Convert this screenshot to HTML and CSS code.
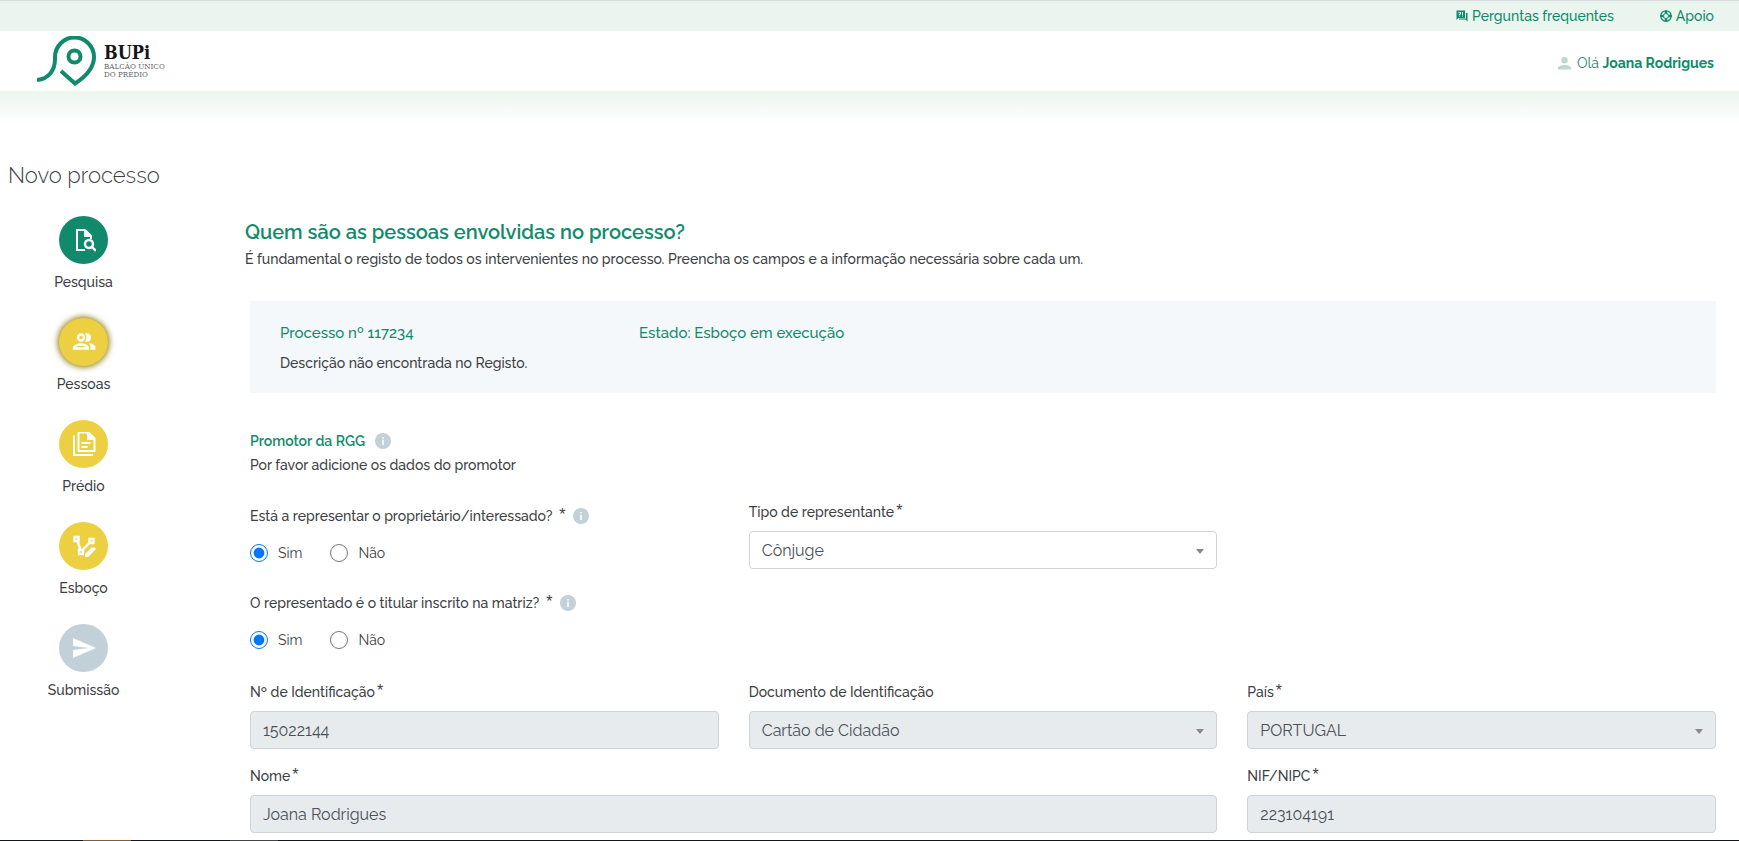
FILE: index.html
```html
<!DOCTYPE html>
<html lang="pt">
<head>
<meta charset="utf-8">
<title>BUPi - Novo processo</title>
<link rel="stylesheet" href="styles.css">
</head>
<body>
<nav class="topbar" aria-label="Ajuda">
  <a class="topbar-link" href="#faq">
    <svg class="icon-small" viewBox="0 0 24 24" aria-hidden="true"><path fill="currentColor" fill-rule="evenodd" d="M1 1h17v15H5l-4 4zM5 4v3h2V5h1v3H6v2h2V9h2V4zm1 7v2h2v-2zm6-7v6h2V4zm0 7v2h2v-2z"/><path fill="currentColor" d="M20 6h3v17l-4-4H6v-2h14z"/></svg>
    <span>Perguntas frequentes</span>
  </a>
  <a class="topbar-link" href="#apoio">
    <svg class="icon-small" viewBox="0 0 24 24" aria-hidden="true"><g fill="none" stroke="currentColor"><circle cx="12" cy="12" r="10.500" stroke-width="2.500"/><circle cx="12" cy="12" r="5" stroke-width="2"/><path stroke-width="5" d="M12 1v6M12 17v6M1 12h6M17 12h6"/></g></svg>
    <span>Apoio</span>
  </a>
</nav>
<header class="header">
  <a class="brand" href="#inicio" aria-label="BUPi Balcão Único do Prédio">
    <svg class="brand-mark" viewBox="0 0 60 50" aria-hidden="true"><g fill="none" stroke="#118a6b" stroke-width="4"><path d="M0 44C12 43 18 34 18 23V21A19 19 0 0 1 57 21C57 33 48 41 38 47.500L24 35"/><circle cx="37.500" cy="20.500" r="6"/></g></svg>
    <span class="brand-text">
      <strong class="brand-name">BUPi</strong>
      <span class="brand-sub">BALCÃO ÚNICO<br>DO PRÉDIO</span>
    </span>
  </a>
  <a class="user" href="#perfil">
    <svg class="icon-user" viewBox="0 0 16 16" aria-hidden="true"><path fill="#bdd9cc" d="M8 8a3.500 3.500 0 1 0 0-7 3.500 3.500 0 0 0 0 7zm0 1.500c-3 0-7 1.200-7 3.500v1.500h14V13c0-2.300-4-3.500-7-3.500z"/></svg>
    <span>Olá <strong>Joana Rodrigues</strong></span>
  </a>
</header>
<div class="fade"></div>
<h1 class="page-title">Novo processo</h1>
<div class="layout">
  <nav class="steps" aria-label="Etapas">
    <a class="step" href="#pesquisa">
      <span class="disc disc-done"><svg class="icon-step" viewBox="0 0 24 24"><path fill="none" stroke="#fff" stroke-width="2" d="M13 22H5V2h8l6 6v3"/><path fill="#fff" d="M12 1l8 8h-8z"/><circle cx="17" cy="16" r="4" fill="none" stroke="#fff" stroke-width="2.400"/><path stroke="#fff" stroke-width="2.400" d="M19 18l5 5"/></svg></span>
      <span>Pesquisa</span>
    </a>
    <a class="step" href="#pessoas" aria-current="step">
      <span class="disc disc-pending disc-current"><svg class="icon-step" viewBox="0 0 24 24"><g fill="none" stroke="#fff" stroke-width="2.400"><circle cx="9" cy="7.500" r="3"/><path d="M2 18.500v-.5c0-2 4-3.500 7-3.500s7 1.500 7 3.500v.5z"/></g><path fill="#fff" d="M13 3.800c3-1.500 6 .5 6 3.700s-3 5.200-6 3.700c2-2 2-5.400 0-7.400zM17 13c3 .5 6.500 2 6.500 5v1.700H18.500V18c0-2-.5-3.500-1.500-5z"/></svg></span>
      <span>Pessoas</span>
    </a>
    <a class="step" href="#predio">
      <span class="disc disc-pending"><svg class="icon-step" viewBox="0 0 24 24"><g fill="none" stroke="#fff" stroke-width="2"><path d="M6.500 0.500h10l6 6V19h-16zM2 3.500V23h19M9.500 11h9M9.500 15h6"/></g><path fill="#fff" d="M15 0l8 8h-8z"/></svg></span>
      <span>Prédio</span>
    </a>
    <a class="step" href="#esboco">
      <span class="disc disc-pending"><svg class="icon-step" viewBox="0 0 24 24"><g fill="none" stroke="#fff" stroke-width="2.400"><path d="M2.500 3h4v4h-4zM17.500 5h4v4h-4zM7 16h4v4H7zM5.500 7l3 9M17.500 9l-7 7"/></g><path fill="#fff" d="M13 20l7-7 1 1 1-1 2 2-8 8h-3z"/></svg></span>
      <span>Esboço</span>
    </a>
    <a class="step" href="#submissao">
      <span class="disc disc-off"><svg class="icon-step" viewBox="0 0 24 24"><path fill="#fff" d="M1 2l23 10L1 22v-8l16-2L1 10z"/></svg></span>
      <span>Submissão</span>
    </a>
  </nav>
  <main class="main">
    <div class="intro">
      <h2 class="intro-title">Quem são as pessoas envolvidas no processo?</h2>
      <p class="text">É fundamental o registo de todos os intervenientes no processo. Preencha os campos e a informação necessária sobre cada um.</p>
    </div>
    <section class="summary">
      <div class="summary-row">
        <span>Processo nº 117234</span>
        <span>Estado: Esboço em execução</span>
      </div>
      <p class="text">Descrição não encontrada no Registo.</p>
    </section>
    <form class="form">
      <div class="section-head">
        <h3 class="section-title">Promotor da RGG <svg class="info" viewBox="0 0 16 16"><circle cx="8" cy="8" r="8" fill="#c2d0d8"/><path fill="#fff" d="M7.200 4h1.600v1.600H7.200zM7.200 6.800h1.600V12H7.200z"/></svg></h3>
        <p class="text">Por favor adicione os dados do promotor</p>
      </div>
      <div class="grid">
        <div class="questions">
          <fieldset class="question">
            <legend class="legend">Está a representar o proprietário/interessado? <span class="star">*</span> <svg class="info" viewBox="0 0 16 16"><circle cx="8" cy="8" r="8" fill="#c2d0d8"/><path fill="#fff" d="M7.200 4h1.600v1.600H7.200zM7.200 6.800h1.600V12H7.200z"/></svg></legend>
            <div class="options">
              <label class="option"><input class="radio" type="radio" name="representa" checked> Sim</label>
              <label class="option"><input class="radio" type="radio" name="representa"> Não</label>
            </div>
          </fieldset>
          <fieldset class="question">
            <legend class="legend">O representado é o titular inscrito na matriz? <span class="star">*</span> <svg class="info" viewBox="0 0 16 16"><circle cx="8" cy="8" r="8" fill="#c2d0d8"/><path fill="#fff" d="M7.200 4h1.600v1.600H7.200zM7.200 6.800h1.600V12H7.200z"/></svg></legend>
            <div class="options">
              <label class="option"><input class="radio" type="radio" name="titular" checked> Sim</label>
              <label class="option"><input class="radio" type="radio" name="titular"> Não</label>
            </div>
          </fieldset>
        </div>
        <div class="field">
          <label class="label" for="tipo">Tipo de representante<span class="star">*</span></label>
          <span class="select-wrap"><select class="control" id="tipo"><option>Cônjuge</option></select></span>
        </div>
      </div>
      <div class="grid grid-identity">
        <div class="field">
          <label class="label" for="numero">Nº de Identificação<span class="star">*</span></label>
          <input class="control" id="numero" type="text" value="15022144" disabled>
        </div>
        <div class="field">
          <label class="label" for="documento">Documento de Identificação</label>
          <span class="select-wrap"><select class="control" id="documento" disabled><option>Cartão de Cidadão</option></select></span>
        </div>
        <div class="field">
          <label class="label" for="pais">País<span class="star">*</span></label>
          <span class="select-wrap"><select class="control" id="pais" disabled><option>PORTUGAL</option></select></span>
        </div>
        <div class="field field-wide">
          <label class="label" for="nome">Nome<span class="star">*</span></label>
          <input class="control" id="nome" type="text" value="Joana Rodrigues" disabled>
        </div>
        <div class="field">
          <label class="label" for="nif">NIF/NIPC<span class="star">*</span></label>
          <input class="control" id="nif" type="text" value="223104191" disabled>
        </div>
      </div>
    </form>
  </main>
</div>
<div class="bottom-edge"></div>
</body>
</html>
```
FILE: styles.css
```css
* { box-sizing: border-box; }

body {
  margin: 0;
  background: #fff;
  color: #3d4043;
  font-family: Raleway, Lato, "Noto Sans", sans-serif;
  font-size: 14px;
  font-weight: 500;
  line-height: 20px;
}

a { color: inherit; text-decoration: none; }
h1, h2, h3, p { margin: 0; }

.topbar {
  display: flex;
  justify-content: flex-end;
  align-items: center;
  gap: 46px;
  height: 31px;
  padding: 0 25px;
  border-top: 1px solid #d8dadd;
  background: #ebf5f0;
  color: #118a6b;
}
.topbar-link { display: flex; align-items: center; gap: 4px; }
.icon-small { width: 12px; height: 12px; }

.header {
  display: flex;
  justify-content: space-between;
  align-items: center;
  height: 60px;
  padding: 0 25px 0 37px;
}
.brand { display: flex; align-items: center; gap: 7px; }
.brand-mark { width: 60px; height: 50px; }
.brand-text {
  display: flex;
  flex-direction: column;
  gap: 1px;
  font-family: "DejaVu Serif Condensed", "DejaVu Serif", serif;
}
.brand-name { color: #161616; font-size: 18px; font-weight: 700; line-height: 18px; }
.brand-sub {
  color: #666;
  font-size: 8px;
  font-weight: 400;
  line-height: 8px;
}
.user {
  display: flex;
  align-items: center;
  gap: 5px;
  padding-top: 4px;
  color: #118a6b;
  font-weight: 400;
}
.user strong { font-weight: 700; }
.icon-user { width: 15px; height: 15px; }

.fade { height: 34px; background: linear-gradient(#ebf5f0, #fff); }

.page-title {
  padding: 36px 8px 0;
  font-size: 22px;
  font-weight: 300;
  line-height: 28px;
}

.layout { display: flex; padding: 27px 23px 0 8px; }

.steps {
  display: flex;
  flex-direction: column;
  flex: none;
  width: 151px;
  margin-right: 86px;
}
.step {
  display: flex;
  flex-direction: column;
  align-items: center;
  gap: 8px;
  height: 102px;
}
.disc {
  display: flex;
  align-items: center;
  justify-content: center;
  width: 49px;
  height: 48px;
  border-radius: 50%;
}
.disc-done { background: #118a6b; }
.disc-pending { background: #ecd042; }
.disc-current { box-shadow: 0 0 6px 1px #8a7400; }
.disc-off { background: #c2d0d8; }
.icon-step { width: 24px; height: 24px; }

.main { flex: 1; min-width: 0; padding-top: 2px; }
.intro-title {
  color: #118a6b;
  font-size: 20px;
  font-weight: 600;
  line-height: 28px;
}
.text { line-height: 26px; }

.summary {
  margin: 29px 0 0 5px;
  padding: 17px 30px;
  background: #f5f8fb;
}
.summary-row {
  display: grid;
  grid-template-columns: 1fr 3fr;
  gap: 10px;
  margin-bottom: 2px;
  color: #118a6b;
  font-size: 15px;
  line-height: 30px;
}

.form { padding-left: 5px; }
.section-head { margin-top: 37px; }
.section-title {
  display: flex;
  align-items: center;
  gap: 10px;
  color: #118a6b;
  font-size: 14px;
  font-weight: 600;
  line-height: 22px;
}
.info { flex: none; width: 16px; height: 16px; }

.grid {
  display: grid;
  grid-template-columns: repeat(3, minmax(0, 1fr));
  gap: 17px 30px;
  margin-top: 24px;
}
.grid-identity { margin-top: 32px; }
.question { margin: 0; padding: 0; border: 0; }
.question + .question { margin-top: 26px; }
.legend {
  display: flex;
  align-items: center;
  gap: 7px;
  padding: 4px 0 0;
}
.star {
  align-self: flex-start;
  font-family: "Liberation Sans", sans-serif;
  font-size: 16px;
  font-weight: 400;
  line-height: 18px;
}
.options { display: flex; gap: 28px; margin-top: 17px; }
.option { display: flex; align-items: center; gap: 10px; font-weight: 400; }
.radio { width: 18px; height: 18px; margin: 0; }

.field { display: flex; flex-direction: column; gap: 9px; }
.field-wide { grid-column: span 2; }
.label { display: flex; gap: 2px; }
.select-wrap { display: block; position: relative; }
.select-wrap::after {
  content: "";
  position: absolute;
  top: 18px;
  right: 13px;
  border: 4px solid transparent;
  border-top: 5px solid #888;
  border-bottom: 0;
  pointer-events: none;
}
.control {
  display: block;
  width: 100%;
  height: 38px;
  padding: 0 12px;
  border: 1px solid #ced4da;
  border-radius: 4px;
  background: #fff;
  color: #495057;
  font-family: inherit;
  font-size: 16px;
  font-weight: 400;
  appearance: none;
}
.control:disabled { background: #e8ebee; opacity: 1; }

.bottom-edge {
  position: fixed;
  inset: auto 0 0;
  height: 1px;
  background: linear-gradient(90deg, #15161b 83px, #8a5a30 83px 131px, #15161b 131px 230px, #444 230px 278px, #15161b 278px);
}
```
